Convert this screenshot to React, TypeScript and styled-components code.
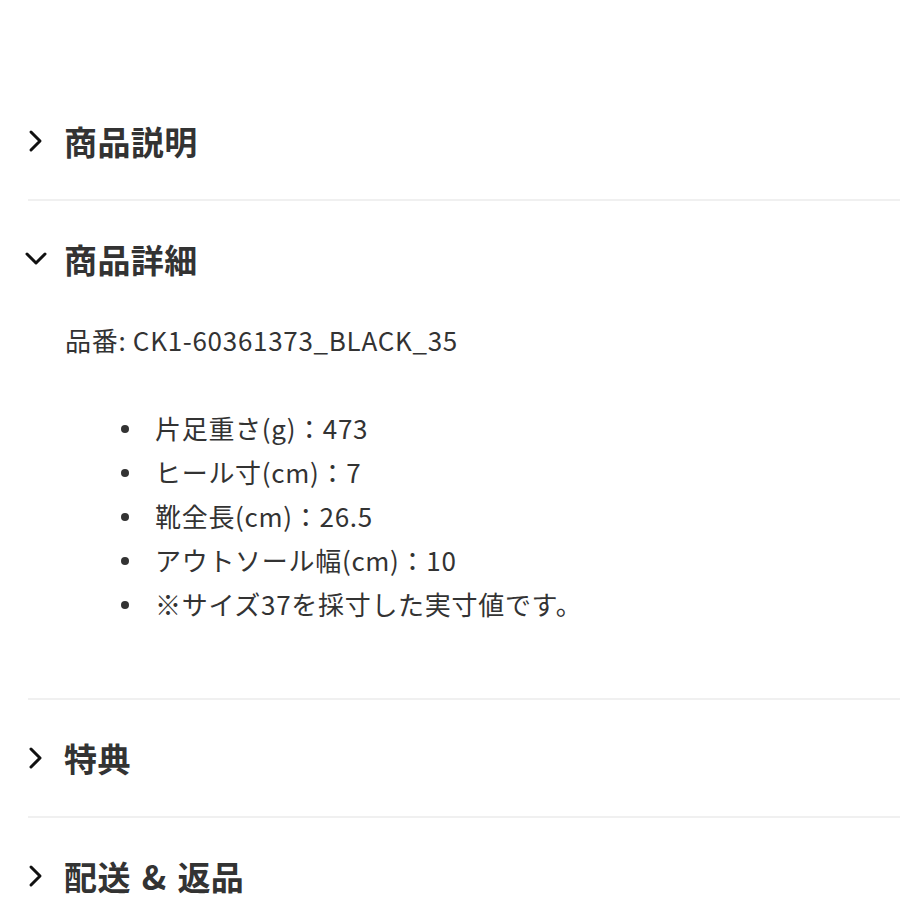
import React from 'react'
import styled, { createGlobalStyle } from 'styled-components'

const GlobalStyle = createGlobalStyle`
  body {
    margin: 0;
    background: #fff;
    font-family: 'Noto Sans CJK JP', 'Noto Sans', sans-serif;
    color: #333;
  }
`

const Page = styled.div`
  width: 900px;
  height: 900px;
  overflow: hidden;
  padding-top: 83px;
  box-sizing: border-box;
`

const Section = styled.section<{ $last?: boolean }>`
  margin-left: 28px;
  border-bottom: ${({ $last }) => ($last ? 'none' : '2px solid #f0f0f0')};
`

const Header = styled.div`
  display: flex;
  align-items: center;
  height: 116px;
`

const Chevron = styled.span<{ $open?: boolean }>`
  width: ${({ $open }) => ($open ? '40px' : '36px')};
  margin-left: ${({ $open }) => ($open ? '-4px' : '0')};
  display: flex;
  align-items: center;
  color: #111;
`

const Title = styled.h2`
  margin: 0;
  font-size: 33px;
  font-weight: 700;
  color: #333;
  letter-spacing: 0.4px;
  word-spacing: 3px;
`

const Body = styled.div`
  padding: 6px 0 72px 37px;
  font-size: 26px;
  letter-spacing: 0.7px;
  color: #333;
`

const Code = styled.p`
  margin: 0 0 49px;
  line-height: 34px;
`

const List = styled.ul`
  margin: 0;
  padding: 0 0 0 90px;
  list-style: none;
`

const Item = styled.li`
  position: relative;
  line-height: 44px;

  &::before {
    content: '';
    position: absolute;
    left: -34px;
    top: 19px;
    width: 8px;
    height: 8px;
    border-radius: 50%;
    background: #333;
  }
`

const Right = () => (
  <svg width="16" height="24" viewBox="0 0 16 24" fill="none">
    <path d="M3 3l9 9-9 9" stroke="#111" strokeWidth="3" strokeLinecap="round" strokeLinejoin="round" />
  </svg>
)

const Down = () => (
  <svg width="24" height="16" viewBox="0 0 24 16" fill="none">
    <path d="M3 3l9 9 9-9" stroke="#111" strokeWidth="3" strokeLinecap="round" strokeLinejoin="round" />
  </svg>
)

const specs = [
  '片足重さ(g)：473',
  'ヒール寸(cm)：7',
  '靴全長(cm)：26.5',
  'アウトソール幅(cm)：10',
  '※サイズ37を採寸した実寸値です。',
]

const App = () => (
  <>
    <GlobalStyle />
    <Page>
      <Section>
        <Header>
          <Chevron><Right /></Chevron>
          <Title>商品説明</Title>
        </Header>
      </Section>
      <Section>
        <Header>
          <Chevron $open><Down /></Chevron>
          <Title>商品詳細</Title>
        </Header>
        <Body>
          <Code>品番: CK1-60361373_BLACK_35</Code>
          <List>
            {specs.map((s, i) => (
              <Item key={i}>{s}</Item>
            ))}
          </List>
        </Body>
      </Section>
      <Section>
        <Header>
          <Chevron><Right /></Chevron>
          <Title>特典</Title>
        </Header>
      </Section>
      <Section $last>
        <Header>
          <Chevron><Right /></Chevron>
          <Title>配送 &amp; 返品</Title>
        </Header>
      </Section>
    </Page>
  </>
)

export default App
